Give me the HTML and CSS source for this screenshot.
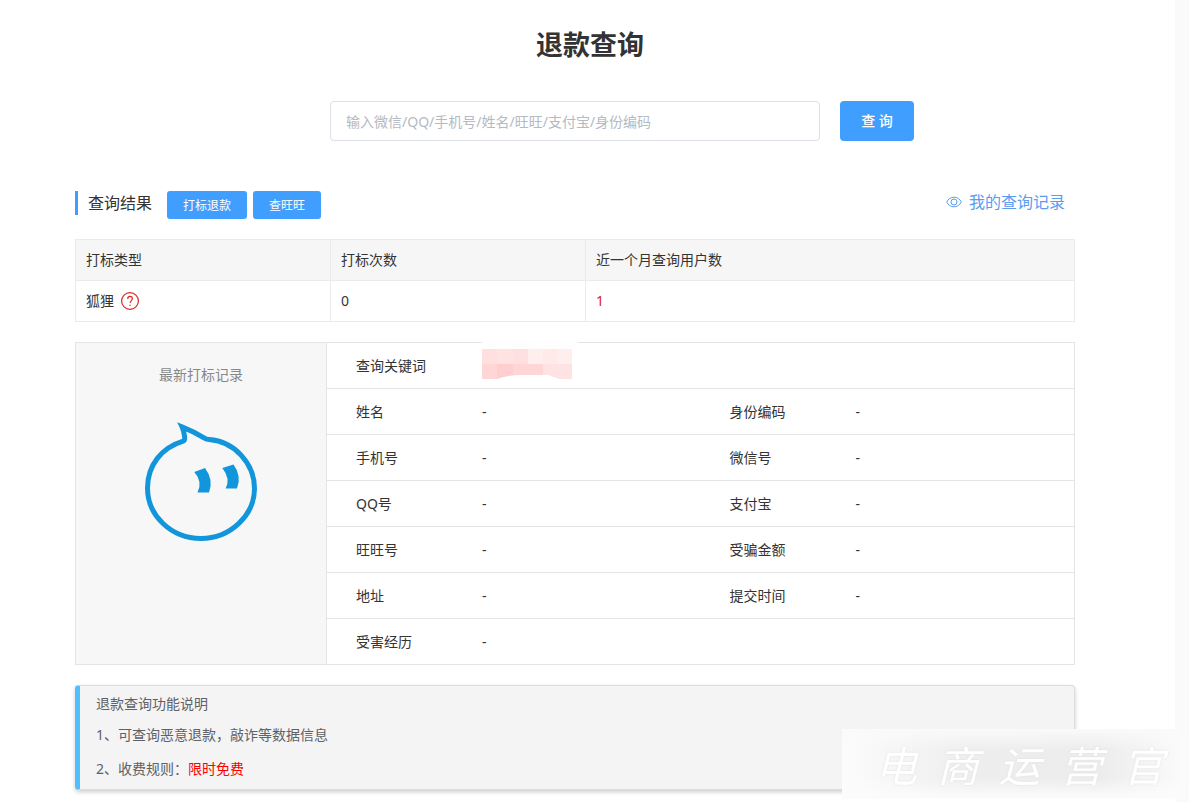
FILE: index.html
```html
<!DOCTYPE html>
<html lang="zh-CN">
<head>
<meta charset="utf-8">
<meta name="viewport" content="width=device-width, initial-scale=1">
<title>退款查询</title>
<link rel="stylesheet" href="styles.css">
</head>
<body>
<main class="page">
  <h1 class="title">退款查询</h1>

  <form class="search">
    <input class="search-input" type="text" aria-label="查询内容" placeholder="输入微信/QQ/手机号/姓名/旺旺/支付宝/身份编码">
    <button class="btn btn-search" type="button">查 询</button>
  </form>

  <div class="toolbar">
    <h2 class="toolbar-title">查询结果</h2>
    <button class="btn btn-small" type="button">打标退款</button>
    <button class="btn btn-small" type="button">查旺旺</button>
    <a class="history" href="#">
      <svg class="eye" viewBox="0 0 16 16" aria-hidden="true"><path d="M.7 8C2.2 4.9 4.8 3.200 8 3.200S13.800 4.900 15.300 8C13.800 11.100 11.200 12.800 8 12.800S2.200 11.100.7 8Z"/><circle cx="8" cy="8" r="3"/></svg>
      <span>我的查询记录</span>
    </a>
  </div>

  <table class="summary">
    <thead>
      <tr><th class="col-narrow">打标类型</th><th class="col-narrow">打标次数</th><th>近一个月查询用户数</th></tr>
    </thead>
    <tbody>
      <tr>
        <td><span class="type">狐狸<svg class="help" viewBox="0 0 18 18" role="img" aria-label="说明"><circle cx="9" cy="9" r="8.400"/><path d="M6.700 7C6.700 5.300 7.600 4.300 9 4.300S11.400 5.300 11.400 6.600C11.400 8.600 9.100 8.700 9.100 11M9.100 12.700V14"/></svg></span></td>
        <td>0</td>
        <td class="red">1</td>
      </tr>
    </tbody>
  </table>

  <section class="record">
    <div class="record-side">
      <p class="record-title">最新打标记录</p>
      <svg class="mascot" viewBox="0 0 114 120" aria-hidden="true">
        <path class="face" d="M57 116.500C27 116.500 3.500 93.500 3.500 66C3.500 43 18 25.500 38.500 19.300Q41 18.500 40.700 15.500Q40.200 9.500 38 4.800Q50 9.500 60.500 16.200Q62.500 17.500 65 17.600C91 19.500 110.500 42 110.500 66.500C110.500 93.500 86 116.500 57 116.500Z"/>
        <path class="eyes" d="M50.300 50L61 46Q70 58 65 70.500H53.500Q59 60 50.300 50ZM78.300 46L89.500 42.500Q98 54 93 66.500H81.500Q87 57 78.300 46Z"/>
      </svg>
    </div>
    <dl class="fields">
      <div class="row"><dt>查询关键词</dt><dd>
        <svg class="mosaic" viewBox="0 0 96 46" role="img" aria-label="已隐藏">
          <path fill="#fffefe" d="M0 0H96V9H0Z"/>
          <path fill="#ffe3e3" d="M0 9H90V39H0Z"/>
          <path fill="#ffdfdf" d="M0 9H15V24H0ZM31 9H46V24H31Z"/>
          <path fill="#ffeeee" d="M46 9H61V24H46ZM75 9H90V24H75Z"/>
          <path fill="#ffe9e9" d="M61 9H75V24H61Z"/>
          <path fill="#ffd6d6" d="M0 24H15V39H0ZM31 24H61V39H31Z"/>
          <path fill="#ffcece" d="M15 24H31V39H15Z"/>
          <path fill="#fff" d="M14 39.500Q24 35 40 35H66Q72 37 78 39.500Z"/>
        </svg></dd></div>
      <div class="row"><dt>姓名</dt><dd>-</dd><dt>身份编码</dt><dd>-</dd></div>
      <div class="row"><dt>手机号</dt><dd>-</dd><dt>微信号</dt><dd>-</dd></div>
      <div class="row"><dt>QQ号</dt><dd>-</dd><dt>支付宝</dt><dd>-</dd></div>
      <div class="row"><dt>旺旺号</dt><dd>-</dd><dt>受骗金额</dt><dd>-</dd></div>
      <div class="row"><dt>地址</dt><dd>-</dd><dt>提交时间</dt><dd>-</dd></div>
      <div class="row"><dt>受害经历</dt><dd>-</dd></div>
    </dl>
  </section>

  <section class="notice">
    <p class="notice-title">退款查询功能说明</p>
    <p>1、可查询恶意退款，敲诈等数据信息</p>
    <p>2、收费规则：<span class="free">限时免费</span></p>
  </section>
</main>
<div class="watermark"><span>电</span><span>商</span><span>运</span><span>营</span><span>官</span></div>
</body>
</html>
```
FILE: styles.css
```css
* { box-sizing: border-box; }

body {
  margin: 0;
  background: #fafafa;
  color: #333;
  font: 14px/20px "Noto Sans", "Noto Sans CJK SC", sans-serif;
}

h1, h2, p, dl, dd { margin: 0; }

.page {
  min-height: 100vh;
  margin-right: 14px;
  padding: 25px 100px 12px 75px;
  background: #fff;
}

.title {
  padding-left: 30px;
  font-size: 27px;
  line-height: 40px;
  font-weight: 700;
  text-align: center;
}

.search {
  display: flex;
  justify-content: center;
  gap: 20px;
  margin-top: 36px;
  padding-left: 94px;
}

.search-input {
  flex: 0 1 490px;
  min-width: 0;
  height: 40px;
  padding: 0 15px;
  border: 1px solid #dcdfe6;
  border-radius: 4px;
  color: #606266;
  font: inherit;
}

.search-input::placeholder { color: #b4bac4; opacity: 1; }

.btn {
  border: 0;
  border-radius: 3px;
  background: #409eff;
  color: #fff;
  font: inherit;
}

.btn-search {
  min-width: 74px;
  height: 40px;
  padding: 0 20px;
  border-radius: 4px;
  font-weight: 500;
}

.toolbar {
  display: flex;
  align-items: flex-start;
  gap: 6px;
  margin-top: 50px;
}

.toolbar-title {
  margin-right: 9px;
  padding-left: 10px;
  border-left: 3px solid #409eff;
  font-size: 16px;
  line-height: 24px;
  font-weight: 400;
}

.btn-small {
  height: 28px;
  padding: 2px 16px 0;
  font-size: 12px;
}

.history {
  display: flex;
  align-items: center;
  gap: 7px;
  margin-left: auto;
  padding-right: 10px;
  color: #5a9cf0;
  font-size: 16px;
  line-height: 22px;
  text-decoration: none;
}

.eye {
  width: 16px;
  height: 16px;
  fill: none;
  stroke: #5a9cf0;
}

.summary {
  width: 100%;
  margin-top: 20px;
  border-collapse: collapse;
  table-layout: fixed;
}

.summary th,
.summary td {
  height: 41px;
  padding: 0 10px;
  border: 1px solid #ebebeb;
  font-weight: 400;
  text-align: left;
}

.summary th { background: #f6f6f6; }
.summary .col-narrow { width: 255px; }
.summary .red { color: #e02020; }

.type {
  display: flex;
  align-items: center;
  gap: 7px;
}

.help {
  width: 18px;
  height: 18px;
  fill: none;
  stroke: #dc2626;
  stroke-width: 1.2;
}

.record {
  display: flex;
  margin-top: 20px;
  border: 1px solid #e4e4e4;
}

.record-side {
  flex: 0 0 251px;
  display: flex;
  flex-direction: column;
  align-items: center;
  gap: 37px;
  padding-top: 22px;
  background: #f7f7f7;
  border-right: 1px solid #e4e4e4;
}

.record-title { color: #888; }

.mascot {
  width: 114px;
  height: 120px;
  fill: none;
}

.face { stroke: #1296db; stroke-width: 5; }
.eyes { fill: #1296db; }

.fields { flex: 1; }

.row {
  display: grid;
  grid-template-columns: 155px minmax(0, 1fr) 155px minmax(0, 1fr);
  align-items: center;
  height: 46px;
  border-bottom: 1px solid #e4e4e4;
}

.row:last-child { height: 45px; border-bottom: 0; }

.row dt { padding-left: 29px; }

.mosaic {
  display: block;
  width: 96px;
  height: 46px;
  margin-top: -6px;
}

.notice {
  display: flex;
  flex-direction: column;
  gap: 14px;
  margin-top: 20px;
  padding: 8px 16px 10px;
  border: 1px solid #dcdcdc;
  border-left: 5px solid #50bfff;
  border-radius: 4px;
  background: #f4f4f4;
  box-shadow: 0 2px 4px rgba(0, 0, 0, .2);
  color: #5e6166;
}

.notice-title { margin-bottom: -3px; }
.free { color: #f00; }

.watermark {
  position: fixed;
  right: 4px;
  bottom: 3px;
  display: flex;
  justify-content: space-between;
  width: 343px;
  height: 70px;
  padding: 0 21px 0 33px;
  background: linear-gradient(#fafafa, rgba(250, 250, 250, 0) 30%, rgba(250, 250, 250, 0) 70%, #fcfcfc), linear-gradient(90deg, #fcfcfc, #eee 35%, #ececec 75%, #fbfbfb);
  color: #fff;
  font: italic 400 42px/70px "Noto Sans CJK SC", sans-serif;
  text-shadow: 0 0 2px #ddd;
}
```
